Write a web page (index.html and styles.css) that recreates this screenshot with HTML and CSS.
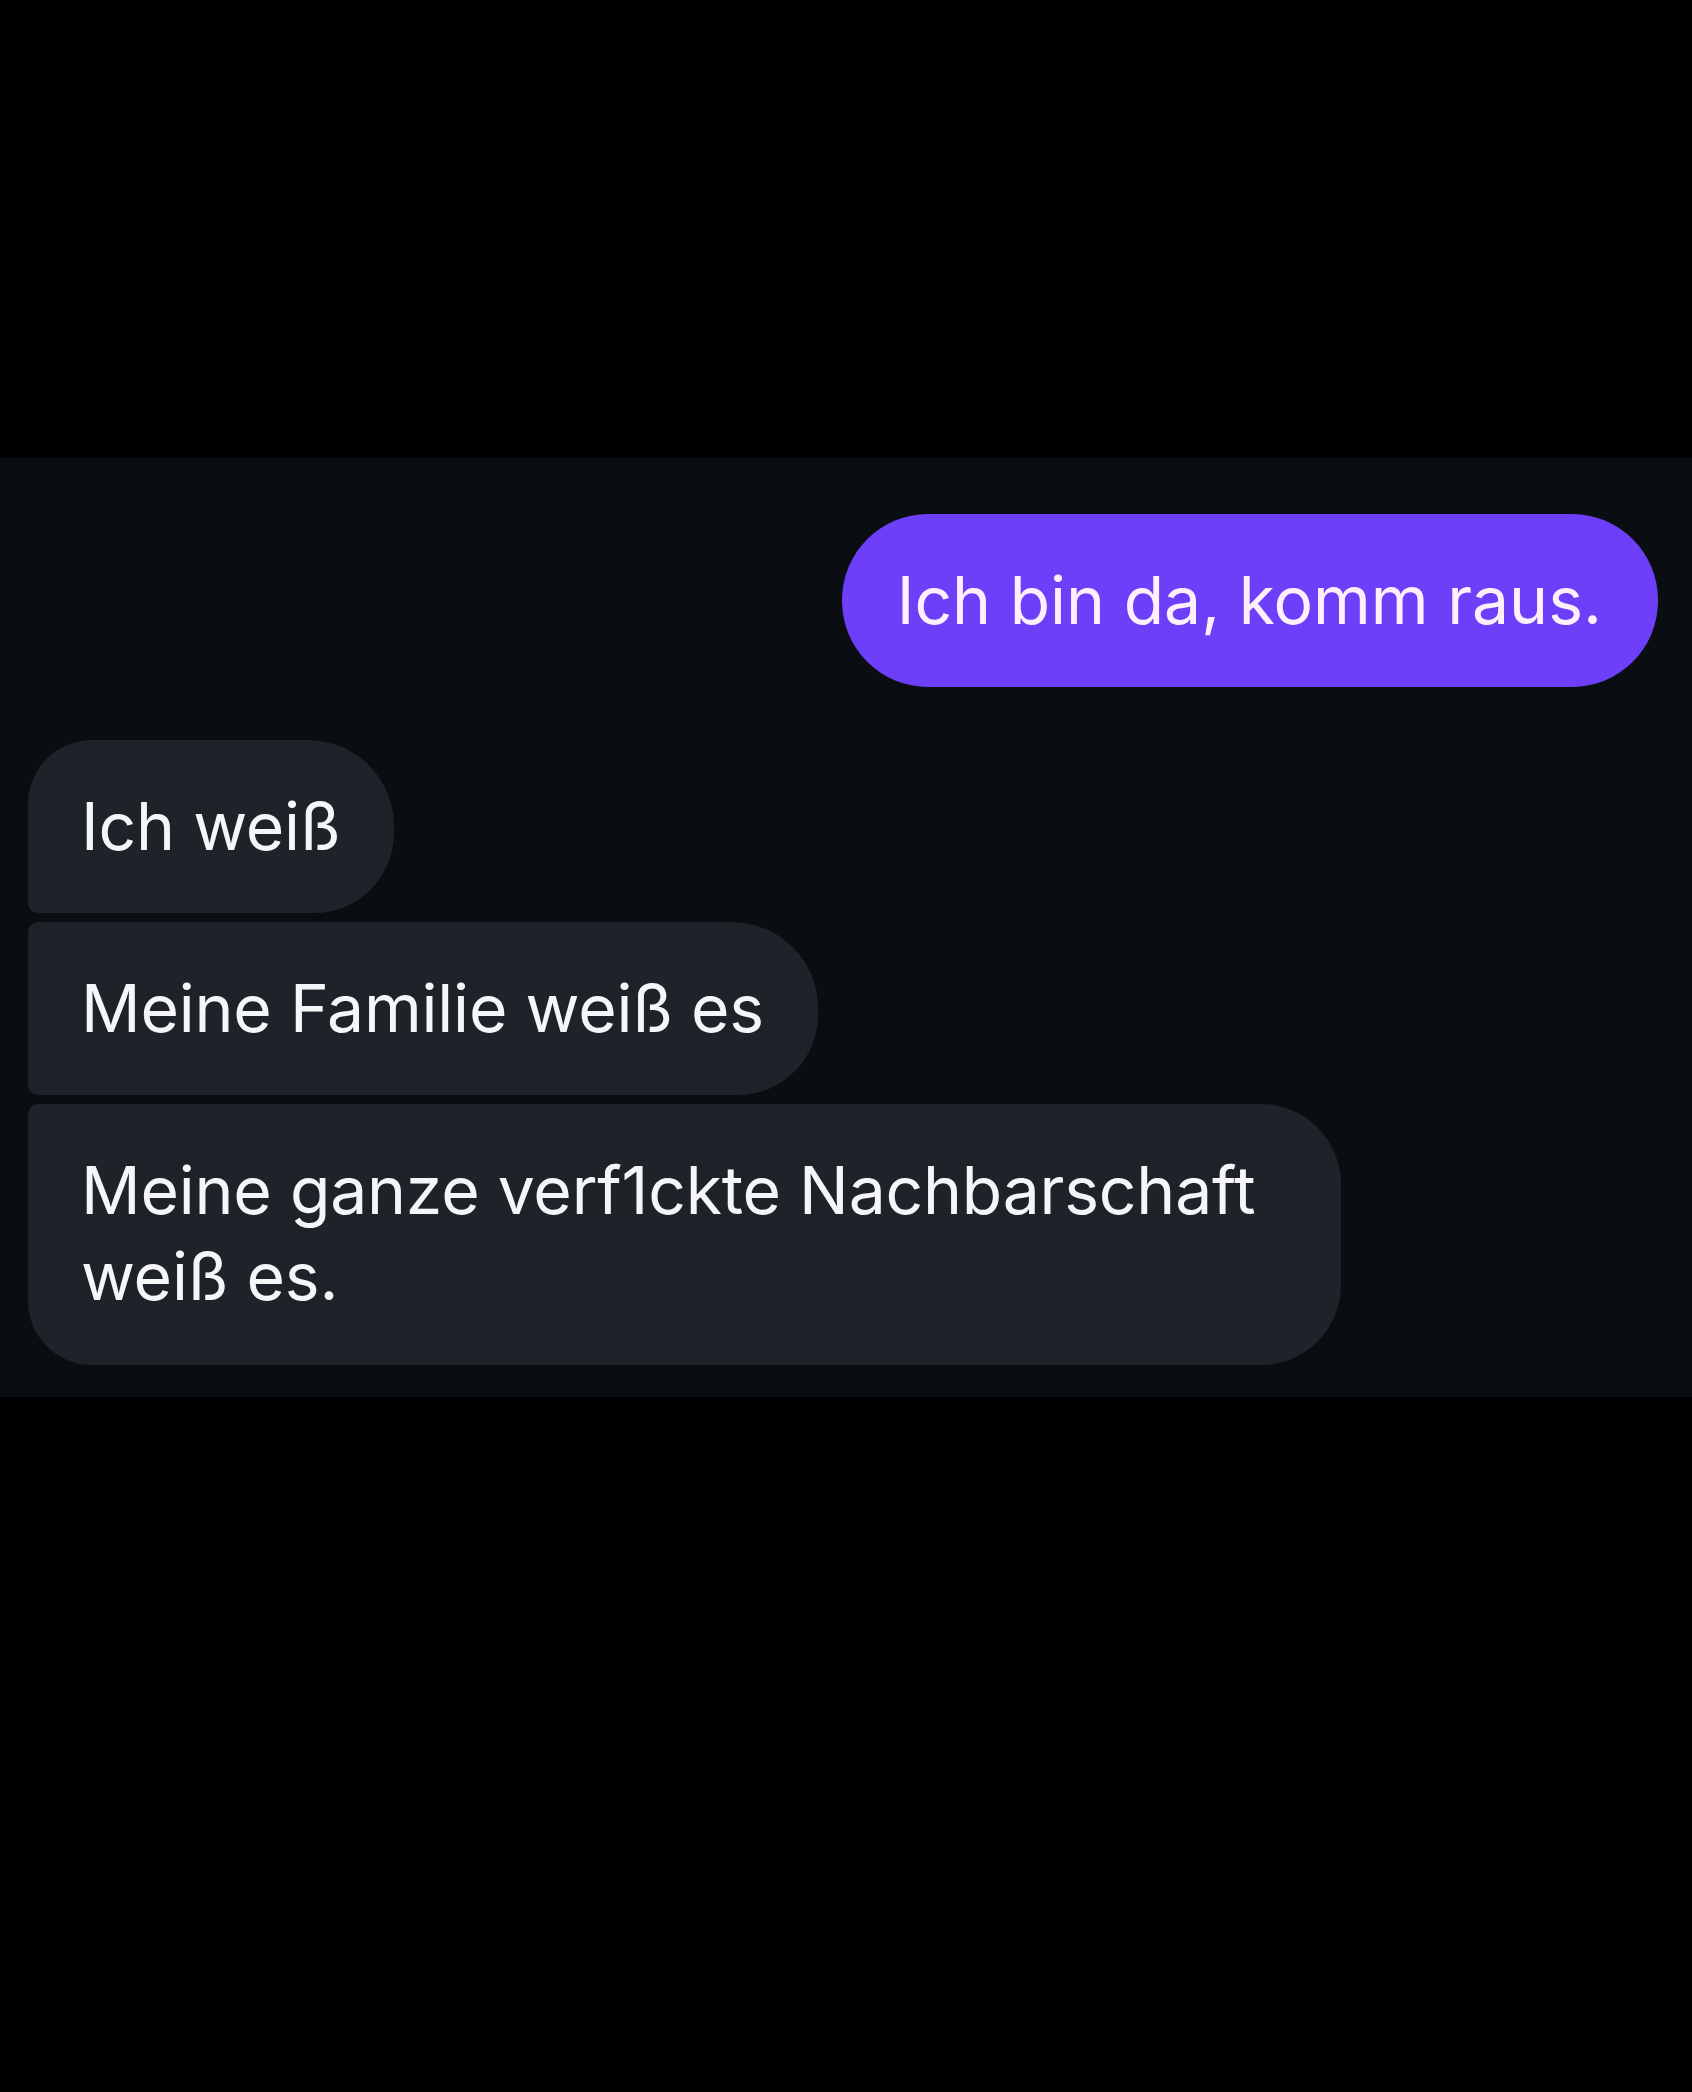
FILE: index.html
```html
<!DOCTYPE html>
<html lang="de">
<head>
  <meta charset="UTF-8" />
  <meta name="viewport" content="width=device-width, initial-scale=1.0" />
  <title>Chat</title>
  <link rel="stylesheet" href="styles.css">
</head>
<body>
  <div class="chat">
    <div class="bubble out">Ich bin da, komm raus.</div>

    <div class="bubble in first">Ich weiß</div>
    <div class="bubble in middle">Meine Familie weiß es</div>
    <div class="bubble in last">Meine ganze verf1ckte Nachbarschaft weiß es.</div>
  </div>
</body>
</html>
```

FILE: styles.css
```css
:root {
  --page-bg: #000;
  --chat-bg: #0a0d12;
  --out-bg: #6e3ff8;
  --out-text: #fbf0fb;
  --in-bg: #1f2228;
  --in-text: #f5f6f8;
  --font-family: 'Inter', 'Roboto', sans-serif;
}

html, body {
  margin: 0;
  padding: 0;
  background-color: var(--page-bg);
  font-family: var(--font-family);
  min-height: 2092px;
}

.chat {
  margin-top: 458px;
  background-color: var(--chat-bg);
  padding: 56px 34px 32px 28px;
  display: flex;
  flex-direction: column;
}

.bubble {
  font-size: 66px;
  line-height: 86px;
  padding: 43px 56px 44px 55px;
  box-sizing: border-box;
}

.out {
  align-self: flex-end;
  background-color: var(--out-bg);
  color: var(--out-text);
  border-radius: 86px;
  margin-bottom: 53px;
}

.in {
  align-self: flex-start;
  background-color: var(--in-bg);
  color: var(--in-text);
  letter-spacing: -0.2px;
  padding-left: 53px;
  padding-right: 54px;
  max-width: 1313px;
}

.in + .in {
  margin-top: 9px;
}

.first {
  border-radius: 64px 86px 80px 10px;
}

.middle {
  border-radius: 10px 86px 80px 10px;
}

.last {
  padding-bottom: 46px;
  border-radius: 10px 80px 80px 64px;
}
```
